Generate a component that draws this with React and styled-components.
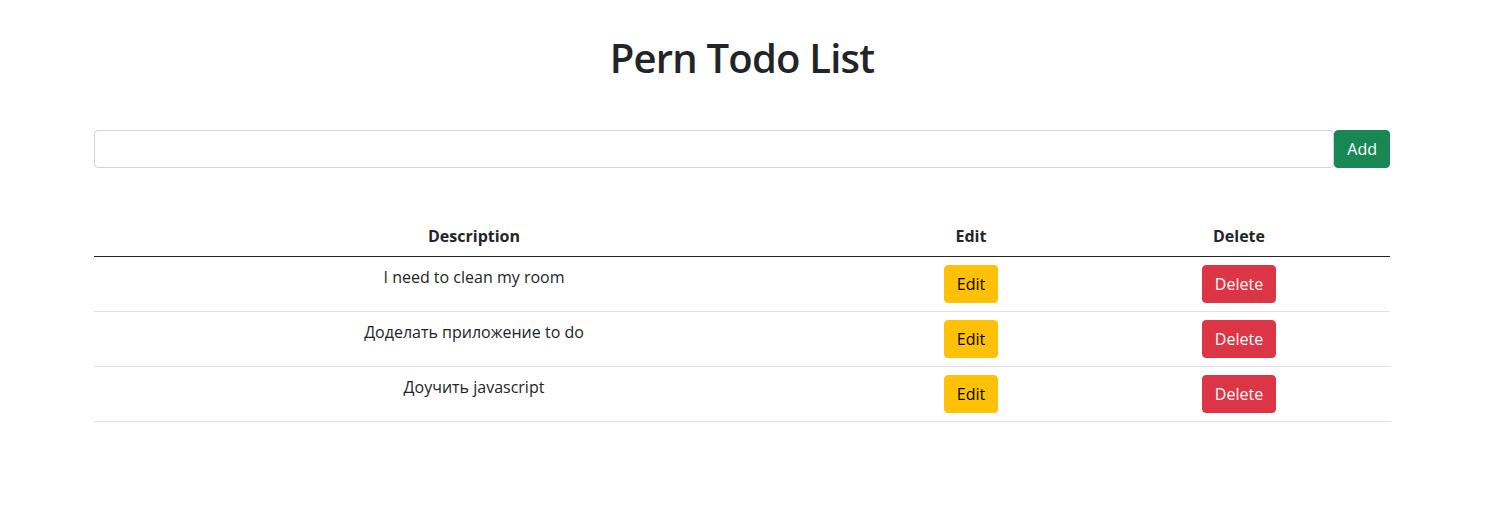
import React, { useState } from "react";
import styled, { createGlobalStyle } from "styled-components";

const GlobalStyle = createGlobalStyle`
  *, *::before, *::after {
    box-sizing: border-box;
  }
  body {
    margin: 0;
    padding-right: 18px;
    font-family: "Open Sans", "Noto Sans", sans-serif;
    font-size: 16px;
    line-height: 1.5;
    color: #212529;
    background: #fff;
  }
`;

const Container = styled.div`
  width: 100%;
  max-width: 1320px;
  padding: 0 12px;
  margin: 0 auto;
`;

const Title = styled.h1`
  margin: 34px 0 0;
  font-size: 40px;
  font-weight: 600;
  line-height: 1.2;
  text-align: center;
  letter-spacing: -0.8px;
`;

const Form = styled.form`
  display: flex;
  margin-top: 48px;
`;

const Input = styled.input`
  display: block;
  flex: 1;
  height: 38px;
  padding: 6px 12px;
  font: inherit;
  color: #212529;
  border: 1px solid #ced4da;
  border-radius: 4px;
  outline: none;
`;

const Button = styled.button`
  display: inline-block;
  height: 38px;
  padding: 6px 12px;
  font: inherit;
  font-size: 16px;
  line-height: 1.5;
  border: 1px solid ${({ $bg }) => $bg};
  border-radius: 4px;
  background: ${({ $bg }) => $bg};
  color: ${({ $fg }) => $fg};
  cursor: pointer;
`;

const Table = styled.table`
  width: 100%;
  margin-top: 48px;
  border-collapse: collapse;
  text-align: center;
  table-layout: fixed;
`;

const Th = styled.th`
  padding: 8px;
  font-weight: 700;
  border-bottom: 1px solid #212529;
  width: ${({ $w }) => $w}px;
`;

const Td = styled.td`
  padding: 8px;
  vertical-align: top;
  border-bottom: 1px solid #dee2e6;
`;

const initialTodos = [
  { id: 1, description: "I need to clean my room" },
  { id: 2, description: "Доделать приложение to do" },
  { id: 3, description: "Доучить javascript" },
];

const App = () => {
  const [description, setDescription] = useState("");
  const [todos, setTodos] = useState(initialTodos);

  const onSubmit = (e) => {
    e.preventDefault();
    if (!description.trim()) return;
    setTodos((prev) => [...prev, { id: Date.now(), description }]);
    setDescription("");
  };

  const deleteTodo = (id) => setTodos((prev) => prev.filter((t) => t.id !== id));

  return (
    <Container>
      <GlobalStyle />
      <Title>Pern Todo List</Title>
      <Form onSubmit={onSubmit}>
        <Input value={description} onChange={(e) => setDescription(e.target.value)} />
        <Button $bg="#198754" $fg="#fff">Add</Button>
      </Form>
      <Table>
        <thead>
          <tr>
            <Th $w={760}>Description</Th>
            <Th $w={234}>Edit</Th>
            <Th $w={302}>Delete</Th>
          </tr>
        </thead>
        <tbody>
          {todos.map((todo) => (
            <tr key={todo.id}>
              <Td>{todo.description}</Td>
              <Td>
                <Button type="button" $bg="#ffc107" $fg="#000">Edit</Button>
              </Td>
              <Td>
                <Button type="button" $bg="#dc3545" $fg="#fff" onClick={() => deleteTodo(todo.id)}>
                  Delete
                </Button>
              </Td>
            </tr>
          ))}
        </tbody>
      </Table>
    </Container>
  );
};

export default App;
